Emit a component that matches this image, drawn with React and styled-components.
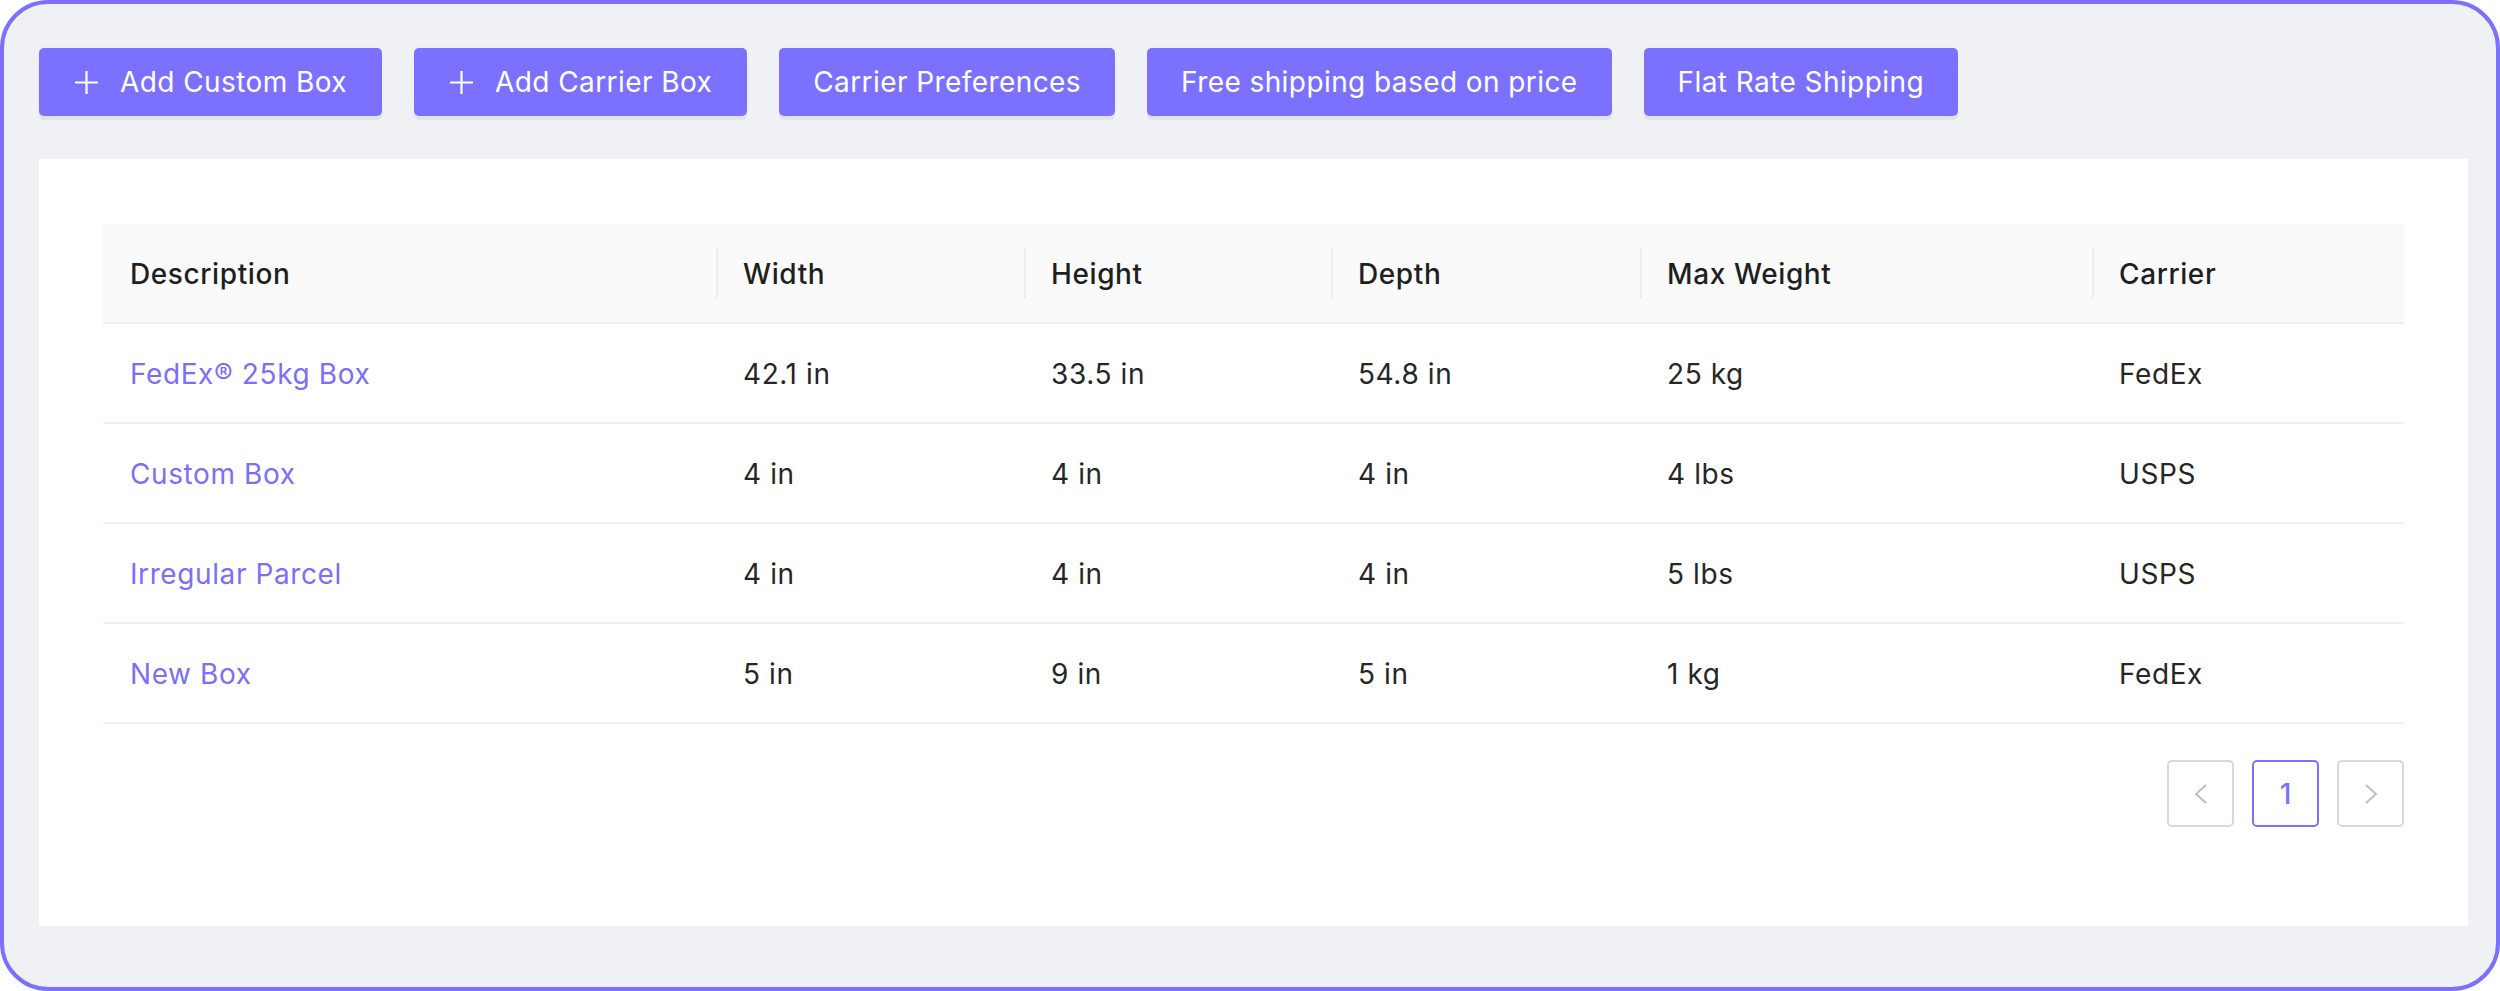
import React from 'react'
import styled, { createGlobalStyle } from 'styled-components'

const purple = '#7c71ff'

const GlobalStyle = createGlobalStyle`
  html, body {
    margin: 0;
    padding: 0;
    background: #ffffff;
  }
  body {
    font-family: Inter, "Noto Sans", "Liberation Sans", sans-serif;
  }
  * {
    box-sizing: border-box;
  }
`

const Frame = styled.div`
  width: 2500px;
  height: 991px;
  border: 4px solid ${purple};
  border-radius: 48px;
  background: #f0f1f5;
  padding: 44px 28px 61px 35px;
  display: flex;
  flex-direction: column;
`

const Toolbar = styled.div`
  display: flex;
  gap: 32px;
`

const ActionButton = styled.button`
  height: 68px;
  padding: 0 ${(p) => (p.$icon ? '35px' : '34px')};
  display: flex;
  align-items: center;
  gap: 21px;
  border: none;
  border-radius: 5px;
  background: ${purple};
  color: #ffffff;
  font-family: Inter, "Liberation Sans", sans-serif;
  font-size: 28px;
  font-weight: 400;
  letter-spacing: 0.42px;
  box-shadow: 0 4px 1px rgba(0, 0, 0, 0.06);
  cursor: pointer;
`

const Panel = styled.section`
  flex: 1;
  margin-top: 43px;
  background: #ffffff;
  padding: 64px 64px 0;
`

const Table = styled.table`
  width: 2301px;
  border-collapse: collapse;
  table-layout: fixed;
  font-size: 28px;
  letter-spacing: 0.6px;
`

const HeadCell = styled.th`
  position: relative;
  height: 100px;
  padding: 2px 27px 0;
  background: #fafafa;
  border-bottom: 2px solid #f0f0f0;
  text-align: left;
  font-weight: 500;
  color: #1f1f1f;

  &::before {
    content: '';
    display: ${(p) => (p.$first ? 'none' : 'block')};
    position: absolute;
    left: 0;
    top: 25px;
    width: 2px;
    height: 50px;
    background: #ececec;
  }
`

const Cell = styled.td`
  height: 100px;
  padding: 2px 27px 0;
  border-bottom: 2px solid #f0f0f0;
  color: ${(p) => (p.$link ? '#7b6ff8' : '#262626')};
  font-weight: 400;
`

const Pager = styled.nav`
  display: flex;
  justify-content: flex-end;
  gap: 18px;
  margin-top: 36px;
`

const PageBox = styled.button`
  width: 67px;
  height: 67px;
  display: flex;
  align-items: center;
  justify-content: center;
  background: #ffffff;
  border: 2px solid ${(p) => (p.$active ? purple : '#d9d9d9')};
  border-radius: 5px;
  color: ${purple};
  font-family: Inter, "Liberation Sans", sans-serif;
  font-size: 28px;
  font-weight: 500;
  padding: 0;
`

const PlusIcon = () => (
  <svg width="25" height="25" viewBox="0 0 25 25">
    <path d="M12.5 1v23M1 12.5h23" stroke="#fff" strokeWidth="2.2" fill="none" />
  </svg>
)

const Chevron = ({ dir }) => (
  <svg width="16" height="22" viewBox="0 0 16 22">
    <polyline
      points={dir === 'left' ? '13,2 3,11 13,20' : '3,2 13,11 3,20'}
      stroke="#bfbfbf"
      strokeWidth="2"
      fill="none"
    />
  </svg>
)

const columns = [
  { label: 'Description', width: 613 },
  { label: 'Width', width: 308 },
  { label: 'Height', width: 307 },
  { label: 'Depth', width: 309 },
  { label: 'Max Weight', width: 452 },
  { label: 'Carrier', width: 312 },
]

const rows = [
  ['FedEx® 25kg Box', '42.1 in', '33.5 in', '54.8 in', '25 kg', 'FedEx'],
  ['Custom Box', '4 in', '4 in', '4 in', '4 lbs', 'USPS'],
  ['Irregular Parcel', '4 in', '4 in', '4 in', '5 lbs', 'USPS'],
  ['New Box', '5 in', '9 in', '5 in', '1 kg', 'FedEx'],
]

export default function App() {
  return (
    <>
      <GlobalStyle />
      <Frame>
        <Toolbar>
          <ActionButton $icon>
            <PlusIcon />
            Add Custom Box
          </ActionButton>
          <ActionButton $icon>
            <PlusIcon />
            Add Carrier Box
          </ActionButton>
          <ActionButton>Carrier Preferences</ActionButton>
          <ActionButton>Free shipping based on price</ActionButton>
          <ActionButton>Flat Rate Shipping</ActionButton>
        </Toolbar>

        <Panel>
          <Table>
            <colgroup>
              {columns.map((c) => (
                <col key={c.label} style={{ width: c.width }} />
              ))}
            </colgroup>
            <thead>
              <tr>
                {columns.map((c, i) => (
                  <HeadCell key={c.label} $first={i === 0}>
                    {c.label}
                  </HeadCell>
                ))}
              </tr>
            </thead>
            <tbody>
              {rows.map((r) => (
                <tr key={r[0]}>
                  {r.map((v, i) => (
                    <Cell key={i} $link={i === 0}>
                      {v}
                    </Cell>
                  ))}
                </tr>
              ))}
            </tbody>
          </Table>

          <Pager>
            <PageBox>
              <Chevron dir="left" />
            </PageBox>
            <PageBox $active>1</PageBox>
            <PageBox>
              <Chevron dir="right" />
            </PageBox>
          </Pager>
        </Panel>
      </Frame>
    </>
  )
}
